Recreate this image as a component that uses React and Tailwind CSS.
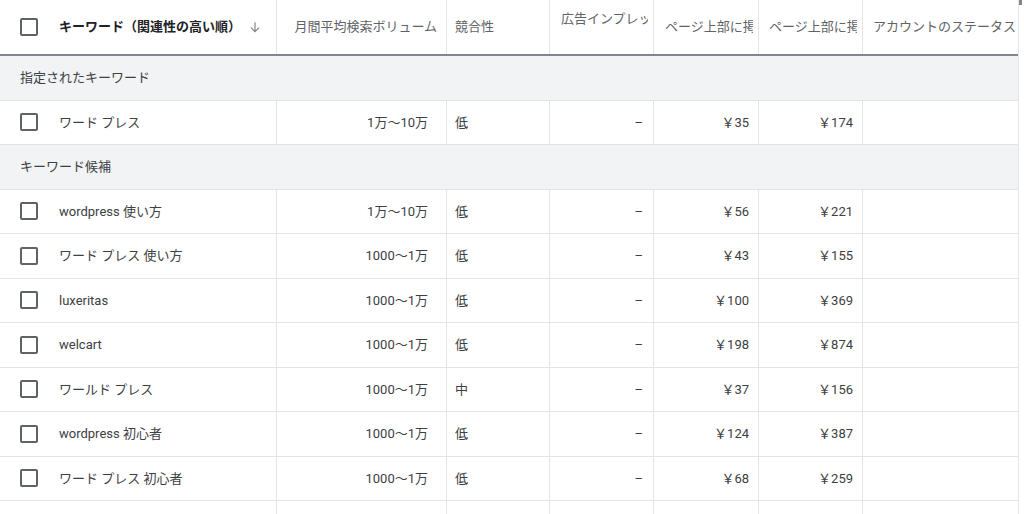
import React from 'react'

const cols = 'grid grid-cols-[276px_170px_103px_104px_105px_104px_1fr]'

const groups = [
  {
    title: '指定されたキーワード',
    rows: [['ワード プレス', '1万〜10万', '低', '￥35', '￥174']],
  },
  {
    title: 'キーワード候補',
    rows: [
      ['wordpress 使い方', '1万〜10万', '低', '￥56', '￥221'],
      ['ワード プレス 使い方', '1000〜1万', '低', '￥43', '￥155'],
      ['luxeritas', '1000〜1万', '低', '￥100', '￥369'],
      ['welcart', '1000〜1万', '低', '￥198', '￥874'],
      ['ワールド プレス', '1000〜1万', '中', '￥37', '￥156'],
      ['wordpress 初心者', '1000〜1万', '低', '￥124', '￥387'],
      ['ワード プレス 初心者', '1000〜1万', '低', '￥68', '￥259'],
      ['', '', '', '', ''],
    ],
  },
]

function Checkbox() {
  return <span className="block w-[18px] h-[18px] border-2 border-[#5f6368] rounded-[2px] shrink-0" />
}

function Row({ row }) {
  const [kw, vol, comp, low, high] = row
  const empty = kw === ''
  return (
    <div className={`${cols} h-[44.5px] border-b border-[#e3e4e6] text-[13px] text-[#3c4043]`}>
      <div className="flex items-center pl-[20px]">
        {!empty && <Checkbox />}
        <span className="ml-[21px]">{kw}</span>
      </div>
      <div className="border-l border-[#e3e4e6] flex items-center justify-end pr-[18px]">{vol}</div>
      <div className="border-l border-[#e3e4e6] flex items-center pl-[8px]">{comp}</div>
      <div className="border-l border-[#e3e4e6] flex items-center justify-end pr-[10px]">{empty ? '' : '–'}</div>
      <div className="border-l border-[#e3e4e6] flex items-center justify-end pr-[9px]">{low}</div>
      <div className="border-l border-[#e3e4e6] flex items-center justify-end pr-[9px]">{high}</div>
      <div className="border-l border-[#e3e4e6]" />
    </div>
  )
}

export default function App() {
  return (
    <div
      className="w-[1024px] h-[514px] overflow-hidden bg-white"
      style={{ fontFamily: "Roboto, 'Noto Sans CJK JP', sans-serif" }}
    >
      <div className="w-[1019px] border-r border-[#e3e4e6] relative">
        {/* header */}
        <div className={`${cols} h-[56px] border-b-2 border-[#80868b] text-[13px] text-[#5f6368]`}>
          <div className="flex items-center pl-[20px]">
            <Checkbox />
            <span className="ml-[21px] font-bold text-[#202124]">キーワード（関連性の高い順）</span>
            <svg className="ml-[7px]" width="14" height="14" viewBox="0 0 24 24" fill="none" stroke="#80868b" strokeWidth="2">
              <path d="M12 4v16M5 13l7 7 7-7" />
            </svg>
          </div>
          <div className="border-l border-[#e3e4e6] flex items-center justify-end pr-[9px] whitespace-nowrap overflow-hidden">
            月間平均検索ボリューム
          </div>
          <div className="border-l border-[#e3e4e6] flex items-center pl-[8px]">競合性</div>
          <div className="border-l border-[#e3e4e6] pt-[9px] pl-[11px] whitespace-nowrap overflow-hidden pr-[5px]">
            <div className="overflow-hidden">広告インプレッ</div>
          </div>
          <div className="border-l border-[#e3e4e6] flex items-center pl-[11px] pr-[5px] whitespace-nowrap overflow-hidden">
            <span className="overflow-hidden">ページ上部に掲</span>
          </div>
          <div className="border-l border-[#e3e4e6] flex items-center pl-[10px] pr-[5px] whitespace-nowrap overflow-hidden">
            <span className="overflow-hidden">ページ上部に掲</span>
          </div>
          <div className="border-l border-[#e3e4e6] flex items-center pl-[10px] whitespace-nowrap overflow-hidden">
            アカウントのステータス
          </div>
        </div>
        <div className="absolute right-[-4px] top-0 w-[3px] h-[5px] bg-[#80868b]" />

        {groups.map((g) => (
          <div key={g.title}>
            <div className="h-[44.5px] bg-[#f1f3f4] border-b border-[#e3e4e6] flex items-center pl-[20px] text-[13px] text-[#3c4043]">
              {g.title}
            </div>
            {g.rows.map((r, i) => (
              <Row key={i} row={r} />
            ))}
          </div>
        ))}
      </div>
    </div>
  )
}
